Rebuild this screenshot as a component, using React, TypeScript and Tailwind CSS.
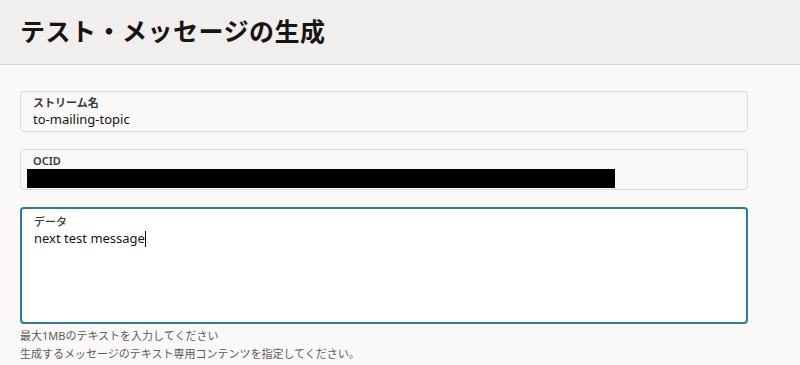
const FONT = "font-['Noto_Sans','Noto_Sans_CJK_JP',sans-serif]";

function Field(props: { label: string; children: React.ReactNode; focused?: boolean }) {
  const { label, children, focused } = props;
  return (
    <div
      className={`w-[728px] rounded-[4px] pl-[12px] ${
        focused
          ? "border-2 border-[#2a7d9c] bg-white h-[117px] pt-[5px]"
          : "border border-[#dcdad8] bg-[#faf9f8] h-[41px] pt-[3px]"
      }`}
    >
      <div className={`text-[11px] leading-[15px] text-[#3a3a3a] ${focused ? "font-medium" : "font-semibold"}`}>
        {label}
      </div>
      {children}
    </div>
  );
}

export default function App() {
  return (
    <div className={`w-[800px] h-[365px] overflow-hidden bg-[#fbf9f8] ${FONT}`}>
      <div className="h-[65px] bg-[#f0efed] border-b border-[#d9d7d4] px-[20px] flex items-center">
        <h1 className="text-[25px] font-bold text-[#161513] tracking-[0.5px] leading-none pb-[1px]">
          テスト・メッセージの生成
        </h1>
      </div>

      <div className="px-[20px] pt-[26px] flex flex-col gap-[17px]">
        <Field label="ストリーム名">
          <div className="text-[13px] leading-[19px] text-[#161513]">to-mailing-topic</div>
        </Field>

        <Field label="OCID">
          <div className="-ml-[6px] mt-[1px] w-[588px] h-[19px] bg-black" />
        </Field>

        <div>
          <Field label="データ" focused>
            <div className="text-[13px] leading-[19px] text-[#161513] flex items-center">
              next test message
              <span className="inline-block w-[1px] h-[16px] bg-black" />
            </div>
          </Field>
          <div className="mt-[3px] text-[11px] leading-[18px] text-[#5c5a58]">
            <div>最大1MBのテキストを入力してください</div>
            <div>生成するメッセージのテキスト専用コンテンツを指定してください。</div>
          </div>
        </div>
      </div>
    </div>
  );
}
